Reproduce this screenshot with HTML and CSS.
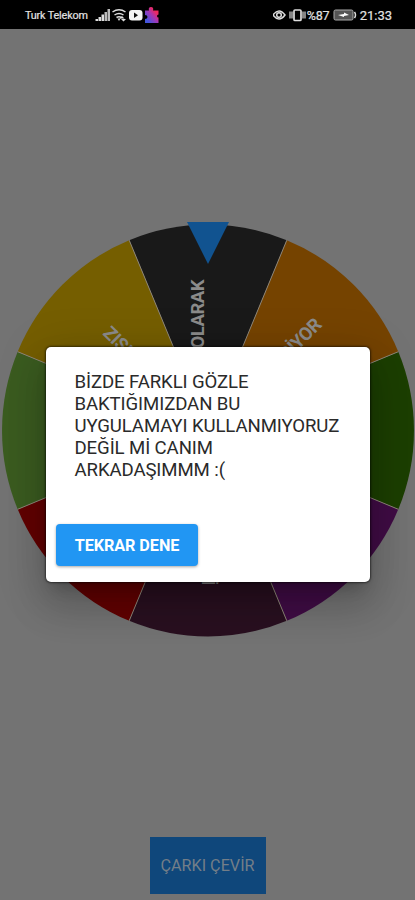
FILE: index.html
```html
<!DOCTYPE html>
<html lang="tr">
<head>
<meta charset="utf-8">
<meta name="viewport" content="width=device-width, initial-scale=1">
<title>Çark</title>
<link rel="stylesheet" href="styles.css">
</head>
<body>
<div class="screen">
  <header class="status">
    <span class="carrier">Turk Telekom</span>
    <svg class="left-icons" viewBox="0 0 66 20" width="66" height="20">
      <g fill="#ddd"><path d="M0.500 14h2.500v2h-2.500zM3.500 12h2.500v4H3.500zM6.500 9.500h2.500v6.500H6.500z"/><path d="M9.500 7h2.500v9h-2.500zM12.500 4H15v12h-2.500z" fill="#bbb"/></g>
      <g fill="none" stroke="#ddd" stroke-width="1.500"><path d="M17.500 7q6.500-4.500 13 0M19.500 10q4.500-3 9 0M21.500 12.500q2.500-1.500 5 0"/></g>
      <path d="M22.500 13.500h3L24 16zM27 11l2.500 2.500h-5zM26 14h5l-2.500 2.500z" fill="#ddd"/>
      <rect x="34" y="5" width="13.500" height="10.500" rx="3" fill="#f5f5f5"/><path d="M39 7.500v5.500l4-2.750z" fill="#111"/>
      <defs><linearGradient id="puzzle" x1="0" y1="1" x2="1" y2="0"><stop offset=".15" stop-color="#4455dd"/><stop offset=".5" stop-color="#a536b5"/><stop offset=".75" stop-color="#ef285f"/></linearGradient></defs>
      <path d="M50 5.500h4q-1-3.500 2-3.500T58 5.500h5.500v4q-1.500 0-1.500 1.500t1.500 1.500V18H50v-4q2.500 0 2.500-2T50 10z" fill="url(#puzzle)"/>
    </svg>
    <div class="status-right">
      <svg viewBox="0 0 34 20" width="34" height="20" fill="none" stroke="#ddd">
        <path d="M0 10q6-8 12 0-6 8-12 0z" stroke-width="1.500"/><circle cx="6" cy="10" r="2.300" stroke-width="1.500"/>
        <rect x="21" y="5" width="7" height="10.500" rx="1" stroke-width="1.700"/><path d="M17 6.500v7M19 6.500v7M30 6.500v7M32 6.500v7" stroke-width="1.200"/>
      </svg>
      <span class="percent">%87</span>
      <svg viewBox="0 0 24 20" width="24" height="20"><rect x="1" y="5" width="19" height="10" rx="1.500" fill="#555" stroke="#aaa"/><path d="M21.500 7q2 3 0 6" fill="none" stroke="#ddd" stroke-width="1.500"/><path d="M5 10l6-1V7.500l5 2.500-5 1v1z" fill="#fff"/></svg>
      <span class="clock">21:33</span>
    </div>
  </header>
  <main class="stage">
    <svg class="wheel" viewBox="0 0 415 415">
      <g transform="translate(208 208.500)">
        <g class="slices">
          <path fill="#191919" d="M0 0L-78.800-190.300A206 206 0 0 1 78.800-190.300z"/>
          <path fill="#754300" d="M0 0L78.800-190.300A206 206 0 0 1 190.300-78.800z"/>
          <path fill="#1c3f00" d="M0 0L190.300-78.800A206 206 0 0 1 190.300 78.800z"/>
          <path fill="#400c45" d="M0 0L190.300 78.800A206 206 0 0 1 78.800 190.300z"/>
          <path fill="#291020" d="M0 0L78.800 190.300A206 206 0 0 1-78.800 190.300z"/>
          <path fill="#620000" d="M0 0L-78.800 190.300A206 206 0 0 1-190.300 78.800z"/>
          <path fill="#3b5c20" d="M0 0L-190.300 78.800A206 206 0 0 1-190.300-78.800z"/>
          <path fill="#755e00" d="M0 0L-190.300-78.800A206 206 0 0 1-78.800-190.300z"/>
        </g>
        <path class="dividers" d="M-78.800-190.300L78.800 190.300M78.800-190.300L-78.800 190.300M190.300-78.800L-190.300 78.800M190.300 78.800L-190.300-78.800"/>
      </g>
      <g class="labels">
        <text transform="translate(204 58) rotate(-90)" text-anchor="end">OLARAK</text>
        <text transform="translate(322.500 104) rotate(-45)" text-anchor="end">VERİYOR</text>
        <text transform="translate(102 112) rotate(45)">ZISIZ</text>
        <text transform="translate(202 363) rotate(90)" text-anchor="end">BİRİ</text>
      </g>
      <path fill="#115390" d="M187 0H229L208 42z"/>
    </svg>
  </main>
  <button class="spin">ÇARKI ÇEVİR</button>
  <section class="dialog" role="dialog">
    <p class="message">BİZDE FARKLI GÖZLE<br>BAKTIĞIMIZDAN BU<br>UYGULAMAYI KULLANMIYORUZ<br>DEĞİL Mİ CANIM<br>ARKADAŞIMMM :(</p>
    <button class="retry">TEKRAR DENE</button>
  </section>
</div>
</body>
</html>
```
FILE: styles.css
```css
* { box-sizing: border-box; }
body { margin: 0; font-family: Roboto, "Liberation Sans", sans-serif; }
button { border: 0; padding: 0; font-family: inherit; }
.screen {
  position: relative;
  display: flex;
  flex-direction: column;
  align-items: center;
  height: 900px;
  overflow: hidden;
  background: #737373;
}
.status {
  display: flex;
  align-items: center;
  width: 100%;
  height: 29px;
  padding: 1px 23px 0 25px;
  background: #000;
  color: #e2e2e2;
}
.carrier { width: 70px; font-size: 10.8px; letter-spacing: -.15px; white-space: nowrap; -webkit-text-stroke: .2px; }
.status svg { flex: none; }
.status-right { display: flex; align-items: center; margin-left: auto; }
.percent { width: 26px; font-size: 12.5px; letter-spacing: -.1px; -webkit-text-stroke: .2px; }
.clock { margin-left: 3px; font-size: 13px; -webkit-text-stroke: .2px; }
.stage { width: 100%; height: 608px; padding-top: 193px; }
.wheel { display: block; width: 415px; height: 415px; }
.dividers { fill: none; stroke: #8d8577; stroke-width: 1; }
.labels { fill: #8b8b8b; font-size: 18.5px; font-weight: 700; letter-spacing: -.5px; }
.spin {
  width: 116px;
  height: 57px;
  margin-top: 200px;
  background: #0f477b;
  color: #737e88;
  font-size: 16.2px;
}
.dialog {
  position: absolute;
  top: 347px;
  left: 46px;
  width: 324px;
  height: 235px;
  padding: 24px 10px 16px;
  display: flex;
  flex-direction: column;
  align-items: flex-start;
  justify-content: space-between;
  border-radius: 5px;
  background: #fff;
  box-shadow: 0 11px 15px -7px rgba(0,0,0,.2), 0 24px 38px 3px rgba(0,0,0,.14), 0 9px 46px 8px rgba(0,0,0,.12), 0 0 2px 1px rgba(0,0,0,.5);
}
.message {
  margin: 0 0 0 18.5px;
  color: #2a2a2a;
  font-size: 18.6px;
  letter-spacing: -.1px;
  line-height: 22px;
  white-space: nowrap;
}
.retry {
  width: 142px;
  height: 42px;
  border-radius: 4px;
  background: #2196f3;
  color: #fff;
  font-size: 16.2px;
  letter-spacing: -.05px;
  font-weight: 700;
  box-shadow: 0 1px 3px rgba(0,0,0,.35);
}
```
